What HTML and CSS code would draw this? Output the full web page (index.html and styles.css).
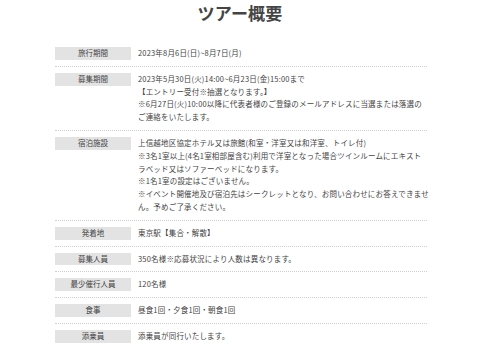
FILE: index.html
```html
<!DOCTYPE html>
<html lang="ja">
<head>
<meta charset="utf-8">
<link rel="stylesheet" href="styles.css">
</head>
<body>
<h1 class="title">ツアー概要</h1>
<div class="table">
  <div class="row">
    <div class="label">旅行期間</div>
    <div class="value">2023年8月6日(日)~8月7日(月)</div>
  </div>
  <div class="row">
    <div class="label">募集期間</div>
    <div class="value">2023年5月30日(火)14:00~6月23日(金)15:00まで<br>【エントリー受付※抽選となります。】<br>※6月27日(火)10:00以降に代表者様のご登録のメールアドレスに当選または落選の<br>ご連絡をいたします。</div>
  </div>
  <div class="row">
    <div class="label">宿泊施設</div>
    <div class="value">上信越地区協定ホテル又は旅館(和室・洋室又は和洋室、トイレ付)<br>※3名1室以上(4名1室相部屋含む)利用で洋室となった場合ツインルームにエキスト<br>ラベッド又はソファーベッドになります。<br>※1名1室の設定はございません。<br>※イベント開催地及び宿泊先はシークレットとなり、お問い合わせにお答えできませ<br>ん。予めご了承ください。</div>
  </div>
  <div class="row">
    <div class="label">発着地</div>
    <div class="value">東京駅【集合・解散】</div>
  </div>
  <div class="row">
    <div class="label">募集人員</div>
    <div class="value">350名様※応募状況により人数は異なります。</div>
  </div>
  <div class="row">
    <div class="label">最少催行人員</div>
    <div class="value">120名様</div>
  </div>
  <div class="row">
    <div class="label">食事</div>
    <div class="value">昼食1回・夕食1回・朝食1回</div>
  </div>
  <div class="row">
    <div class="label">添乗員</div>
    <div class="value">添乗員が同行いたします。</div>
  </div>
</div>
</body>
</html>
```

FILE: styles.css
```css
html, body {
  margin: 0;
  padding: 0;
  background: #fff;
}
body {
  font-family: "Noto Sans CJK JP", "Noto Sans", sans-serif;
  color: #444;
}
.title {
  margin: 0 0 15px;
  height: 26px;
  line-height: 26px;
  font-size: 17px;
  font-weight: bold;
  text-align: center;
  color: #444;
  letter-spacing: 0.2px;
}
.table {
  width: 372px;
  margin: 0 auto 0 55px;
}
.row {
  display: flex;
  align-items: flex-start;
  gap: 7px;
  padding: 6px 0;
  border-bottom: 1px dotted #cfcfcf;
}
.label {
  flex: 0 0 76px;
  height: 12.8px;
  line-height: 12.8px;
  background: #e3e3e3;
  text-align: center;
  font-size: 7.5px;
  color: #444;
}
.value {
  flex: 1;
  font-size: 7.5px;
  line-height: 12.8px;
  letter-spacing: 0.18px;
  color: #444;
  white-space: nowrap;
}
```
